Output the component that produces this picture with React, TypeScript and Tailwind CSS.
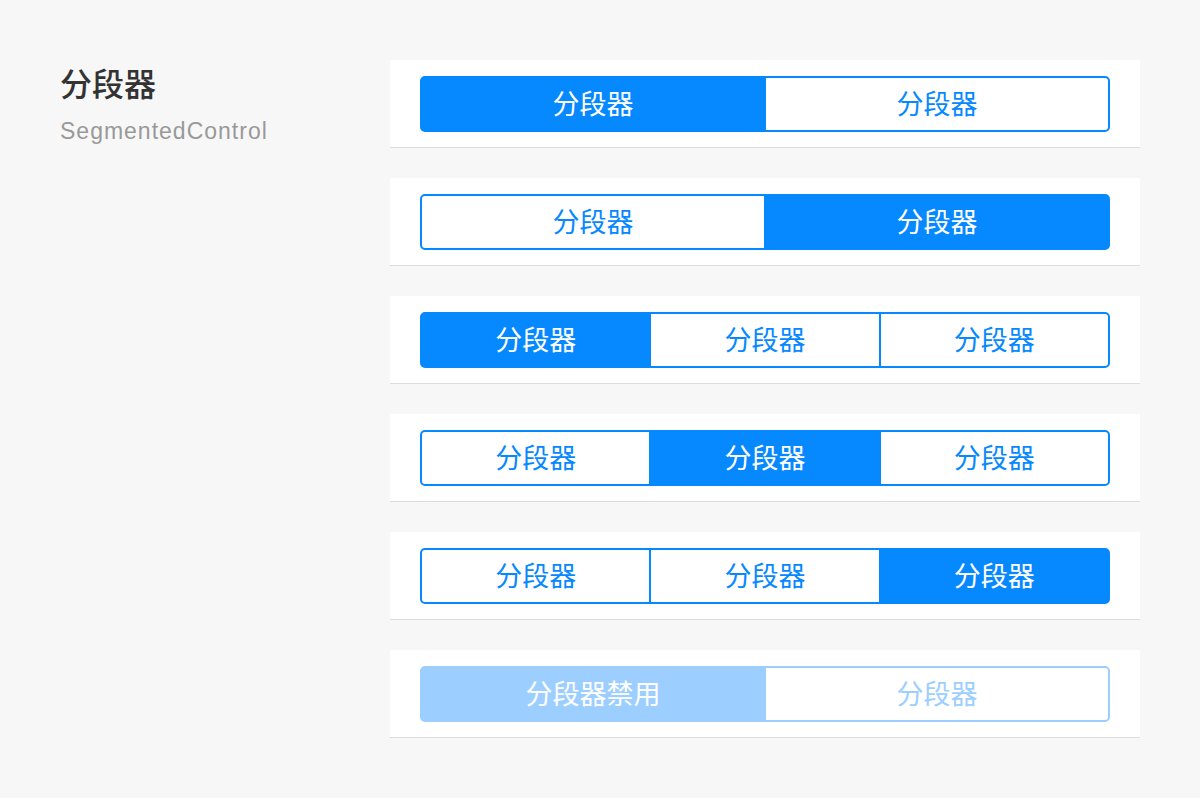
import React from 'react';

interface SegmentedProps {
    items: string[];
    active: number;
    disabled?: boolean;
}

const Segmented: React.FC<SegmentedProps> = ({ items, active, disabled }) => {
    return (
        <div className="flex h-[56px] w-full">
            {items.map((label, i) => {
                const isActive = i === active;
                const first = i === 0;
                const last = i === items.length - 1;
                return (
                    <div
                        key={i}
                        className={[
                            "relative flex flex-1 items-center justify-center border-2 pb-[3px] text-[27px] leading-none",
                            !first && "-ml-[2px]",
                            first && "rounded-l-[5px]",
                            last && "rounded-r-[5px]",
                            isActive && "z-10",
                            disabled
                                ? isActive
                                    ? "border-[#9ccfff] bg-[#9ccfff] text-white"
                                    : "border-[#9ccfff] bg-white text-[#9ccfff]"
                                : isActive
                                    ? "border-[#0688ff] bg-[#0688ff] text-white"
                                    : "border-[#0688ff] bg-white text-[#0688ff]",
                        ]
                            .filter(Boolean)
                            .join(" ")}
                    >
                        {label}
                    </div>
                );
            })}
        </div>
    );
};

const rows: SegmentedProps[] = [
    { items: ["分段器", "分段器"], active: 0 },
    { items: ["分段器", "分段器"], active: 1 },
    { items: ["分段器", "分段器", "分段器"], active: 0 },
    { items: ["分段器", "分段器", "分段器"], active: 1 },
    { items: ["分段器", "分段器", "分段器"], active: 2 },
    { items: ["分段器禁用", "分段器"], active: 0, disabled: true },
];

export default function App() {
    return (
        <div
            className="flex min-h-[798px] w-[1200px] bg-[#f7f7f7] pl-[60px] pt-[60px]"
            style={{ fontFamily: '"Noto Sans CJK SC", "Noto Sans", sans-serif' }}
        >
            {/* Left title */}
            <div className="w-[330px] shrink-0">
                <h1 className="text-[32px] font-medium leading-[44px] text-[#333]">分段器</h1>
                <p
                    className="mt-[12px] text-[23px] leading-[30px] tracking-[1px] text-[#999]"
                    style={{ fontFamily: '"Liberation Sans", Arial, sans-serif' }}
                >
                    SegmentedControl
                </p>
            </div>

            {/* Demos */}
            <div className="flex w-[750px] flex-col gap-[30px]">
                {rows.map((row, i) => (
                    <div key={i} className="border-b border-[#dddddd] bg-white px-[30px] pb-[15px] pt-[16px]">
                        <Segmented {...row} />
                    </div>
                ))}
            </div>
        </div>
    );
}
